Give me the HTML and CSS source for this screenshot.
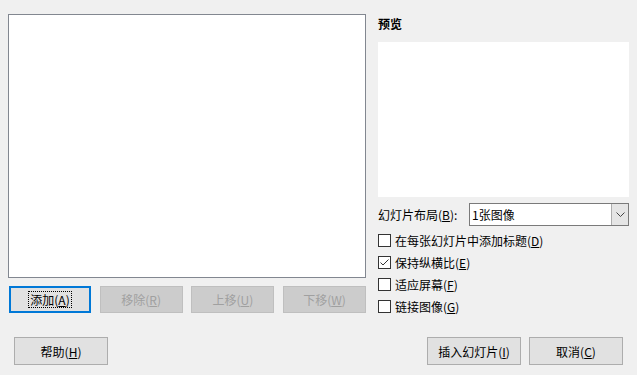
FILE: index.html
```html
<!DOCTYPE html>
<html lang="zh-CN">
<head>
  <meta charset="UTF-8" />
  <title>插入图片</title>
  <link rel="stylesheet" href="styles.css">
</head>
<body>
  <div class="dialog">
    <div class="main">
      <div class="left">
        <div class="listbox"></div>
        <div class="list-buttons">
          <button class="btn focused"><span class="focus-rect">添加(<u>A</u>)</span></button>
          <button class="btn" disabled>移除(<u>R</u>)</button>
          <button class="btn" disabled>上移(<u>U</u>)</button>
          <button class="btn" disabled>下移(<u>W</u>)</button>
        </div>
      </div>

      <div class="right">
        <div class="preview-label">预览</div>
        <div class="preview"></div>

        <div class="layout-row">
          <span class="layout-label">幻灯片布局(<u>B</u>):</span>
          <div class="combo">
            <span class="combo-value">1张图像</span>
            <span class="combo-arrow">
              <svg width="9" height="5" viewBox="0 0 9 5"><path d="M0.5 0.5 L4.5 4.5 L8.5 0.5" fill="none" stroke="#444" stroke-width="1"/></svg>
            </span>
          </div>
        </div>

        <label class="check"><span class="box"></span>在每张幻灯片中添加标题(<u>D</u>)</label>
        <label class="check"><span class="box checked">
          <svg width="11" height="11" viewBox="0 0 11 11"><path d="M1.5 5.5 L4 8 L9.5 2.5" fill="none" stroke="#333" stroke-width="1"/></svg>
        </span>保持纵横比(<u>E</u>)</label>
        <label class="check"><span class="box"></span>适应屏幕(<u>F</u>)</label>
        <label class="check"><span class="box"></span>链接图像(<u>G</u>)</label>
      </div>
    </div>

    <div class="footer">
      <button class="btn wide">帮助(<u>H</u>)</button>
      <div class="footer-right">
        <button class="btn wide">插入幻灯片(<u>I</u>)</button>
        <button class="btn wide">取消(<u>C</u>)</button>
      </div>
    </div>
  </div>
</body>
</html>
```

FILE: styles.css
```css
* {
  box-sizing: border-box;
}

body {
  margin: 0;
  background: #f0f0f0;
  font-family: "Noto Sans CJK SC", "Noto Sans", sans-serif;
  font-size: 12px;
  color: #000;
}

u {
  text-decoration: underline;
  text-underline-offset: 1px;
}

.dialog {
  width: 637px;
  height: 375px;
  padding: 14px 8px 0 8px;
}

.main {
  display: flex;
  gap: 12px;
}

.left {
  width: 358px;
}

.listbox {
  height: 264px;
  background: #fff;
  border: 1px solid #828790;
}

.list-buttons {
  display: flex;
  justify-content: space-between;
  margin-top: 8px;
}

.btn {
  width: 83px;
  height: 27px;
  padding: 0;
  background: #e1e1e1;
  border: 1px solid #adadad;
  font-family: inherit;
  font-size: 12px;
  color: #000;
  display: flex;
  align-items: center;
  justify-content: center;
}

.btn:disabled {
  background: #cccccc;
  border-color: #bfbfbf;
  color: #a0a0a0;
}

.btn.focused {
  width: 82px;
  margin-left: 1px;
  border: 2px solid #0078d7;
}

.focus-rect {
  border: 1px dotted #000;
  padding: 0 1px;
  line-height: 15px;
}

.right {
  width: 251px;
}

.preview-label {
  font-weight: bold;
  line-height: 20px;
}

.preview {
  margin-top: 8px;
  height: 155px;
  background: #fff;
}

.layout-row {
  display: flex;
  align-items: center;
  margin-top: 6px;
  margin-bottom: 3px;
}

.layout-label {
  width: 91px;
}

.combo {
  flex: 1;
  height: 23px;
  display: flex;
  align-items: stretch;
  background: #fff;
  border: 1px solid #7a7a7a;
}

.combo-value {
  flex: 1;
  padding-left: 2px;
  line-height: 21px;
}

.combo-arrow {
  width: 17px;
  background: #e5e5e5;
  border-left: 1px solid #adadad;
  display: flex;
  align-items: center;
  justify-content: center;
}

.check {
  display: flex;
  align-items: center;
  height: 22px;
}

.box {
  width: 13px;
  height: 13px;
  border: 1px solid #333;
  background: #fff;
  margin-right: 4px;
  display: flex;
  align-items: center;
  justify-content: center;
}

.footer {
  display: flex;
  justify-content: space-between;
  margin-top: 20px;
  padding: 0 6px;
}

.footer-right {
  display: flex;
  gap: 8px;
}

.btn.wide {
  width: 94px;
  height: 28px;
}
```
